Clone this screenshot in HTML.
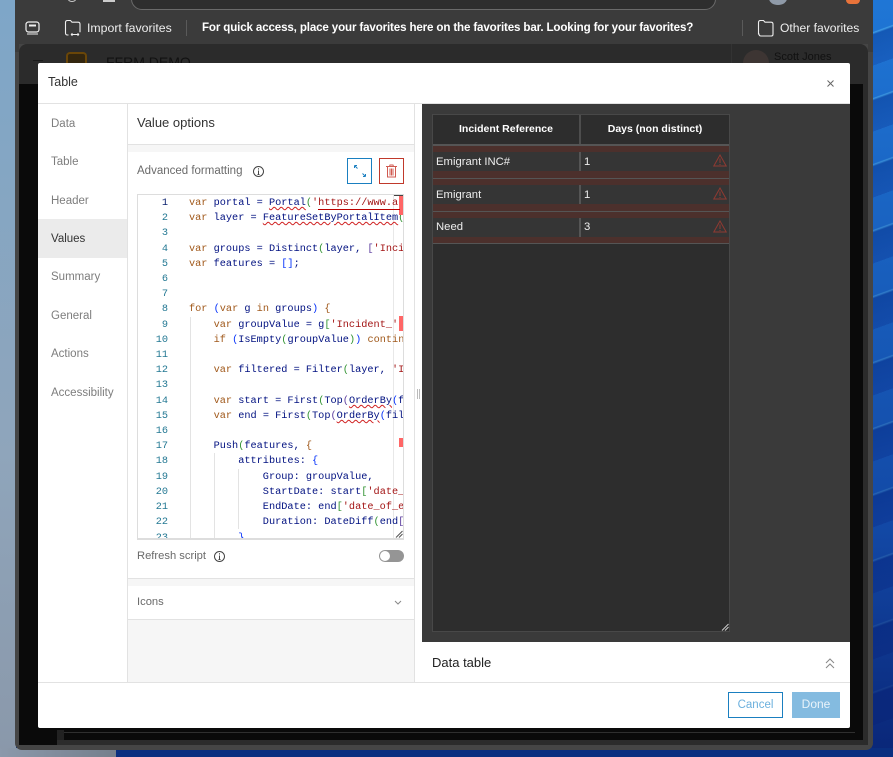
<!DOCTYPE html>
<html><head><meta charset="utf-8"><style>
html,body{margin:0;padding:0;width:893px;height:757px;overflow:hidden;background:#0d2f7c}
*{box-sizing:border-box}
body{position:relative;font-family:"Liberation Sans",sans-serif}
.a{position:absolute}
.t{position:absolute;white-space:pre;line-height:16px}
.nav{position:absolute;left:13px;font-size:11.5px;color:#7d7d7d;line-height:14px;white-space:pre}
.c{position:absolute;left:189px;font:10.25px/15px "Liberation Mono",monospace;white-space:pre;color:#001080;height:15px;width:214px;overflow:hidden}
.n{position:absolute;left:140px;width:28px;text-align:right;font:10.25px/15px "Liberation Mono",monospace;color:#237893}
.k{color:#a0581a}.s{color:#a31515}.b{color:#0431fa}.g{color:#319331}.f{color:#5c3d9e}.w{text-decoration:underline wavy #d02020 1px}
.th{position:absolute;top:115px;height:30px;background:#2d2d2d;color:#fff;font-size:10.5px;font-weight:bold;text-align:center;line-height:28px}
.td{position:absolute;color:#eee;font-size:11.3px;line-height:14px;white-space:pre}
#ed{position:absolute;left:0;top:1px}
</style></head><body>
<div class="a" style="left:0;top:0;width:16px;height:757px;background:linear-gradient(#7ea6c8,#8fa5bb 60%,#8a98aa)"></div>
<div class="a" style="left:872px;top:0;width:21px;height:757px;background:linear-gradient(rgba(40,140,230,.25),rgba(10,40,130,.55) 70%,rgba(8,30,110,.9)),repeating-linear-gradient(160deg,#1c6fd0 0 30px,#49a8ea 31px,#0e4aa8 33px,#1556b8 62px)"></div>
<div class="a" style="left:0;top:748px;width:116px;height:9px;background:linear-gradient(90deg,#8b99ab,#757f8c)"></div>
<div class="a" style="left:116px;top:748px;width:777px;height:9px;background:#0a2f80"></div>

<div class="a" style="left:15px;top:0;width:858px;height:750px;background:#454545;border-radius:0 0 7px 7px"></div>
<div class="a" style="left:15px;top:0;width:858px;height:44px;background:#3b3b3b"></div>
<div class="a" style="left:15px;top:44px;width:4px;height:8px;background:#3b3b3b"></div>
<div class="a" style="left:868px;top:44px;width:5px;height:8px;background:#3b3b3b"></div>
<div class="a" style="left:131px;top:-12px;width:585px;height:21.5px;border:1px solid #6a6a6a;border-radius:14px;background:#2e2e2e"></div>
<div class="a" style="left:68px;top:-3px;width:8px;height:5px;border:1px solid #ccc;border-radius:50%"></div>
<div class="a" style="left:103px;top:0;width:12px;height:2px;background:#ccc"></div>
<div class="a" style="left:769px;top:-8px;width:18px;height:13px;border-radius:50%;background:#8f9aa8"></div>
<div class="a" style="left:846px;top:0;width:14px;height:4px;background:#e8733a;border-radius:0 0 6px 6px"></div>

<!-- app page behind modal -->
<div class="a" style="left:19px;top:44px;width:849px;height:701px;background:#2b2b2b;border-radius:8px 8px 3px 3px"></div>
<div class="a" style="left:19px;top:84px;width:844px;height:656px;background:#0a0a0a"></div>
<div class="a" style="left:57px;top:730px;width:7px;height:15px;background:#222"></div>
<div class="a" style="left:19px;top:740px;width:38px;height:5px;background:#0a0a0a"></div>
<div class="a" style="left:57px;top:740px;width:811px;height:5px;background:#2b2b2b"></div>
<div class="a" style="left:64px;top:732px;width:791px;height:1px;background:#2f2f2f"></div>
<div class="a" style="left:731px;top:44px;width:1px;height:40px;background:#333"></div>
<div class="a" style="left:33px;top:60px;width:10px;height:1px;background:#1a1a1a"></div>
<div class="t" style="left:106px;top:54px;font-size:14px;color:#111">FFRM DEMO</div>
<div class="t" style="left:774px;top:49px;font-size:11px;color:#111">Scott Jones</div>
<div class="a" style="left:66px;top:52px;width:21px;height:14px;background:#33260f;border:2px solid #6a4608;border-bottom:0;border-radius:4px 4px 0 0"></div>
<div class="a" style="left:743px;top:50px;width:26px;height:26px;border-radius:50%;background:#3d3533"></div>

<svg class="a" style="left:24px;top:20px" width="20" height="16" viewBox="0 0 20 16" fill="none" stroke="#eee" stroke-width="1.2"><rect x="2" y="2" width="13" height="10" rx="2.5"/><path d="M5 5.500h7" stroke-width="2"/><path d="M3 14h11" stroke-width="1"/></svg>
<svg class="a" style="left:64px;top:19px" width="18" height="18" viewBox="0 0 18 18" fill="none" stroke="#eee" stroke-width="1.1"><path d="M1.500 14V3.500q0-2 2-2h3l1.500 1.700h6q2 0 2 2v8M1.500 14q0 2 2 2h1"/><path d="M7 15.500h8M7 15.500l1.500-1.300M7 15.500l1.500 1.300M15 15.500l-1.500-1.300M15 15.500l-1.500 1.300" stroke-width=".9"/></svg>
<div class="t" style="left:87px;top:20px;font-size:12.3px;color:#eee">Import favorites</div>
<div class="a" style="left:186px;top:20px;width:1px;height:16px;background:#5a5a5a"></div>
<div class="t" style="left:202px;top:20px;font-size:11.6px;font-weight:bold;color:#fff;letter-spacing:-.15px">For quick access, place your favorites here on the favorites bar. Looking for your favorites?</div>
<div class="a" style="left:742px;top:20px;width:1px;height:16px;background:#5a5a5a"></div>
<svg class="a" style="left:757px;top:19px" width="18" height="18" viewBox="0 0 18 18" fill="none" stroke="#eee" stroke-width="1.1"><path d="M1.500 15V3.500q0-2 2-2h3l1.500 1.700h6q2 0 2 2v10q0 1.800-2 1.800h-10q-2 0-2-2z"/></svg>
<div class="t" style="left:780px;top:20px;font-size:12.1px;color:#eee">Other favorites</div>

<!-- modal -->
<div class="a" style="left:38px;top:63px;width:812px;height:665px;background:#fff;border-radius:2px"></div>
<div class="t" style="left:48px;top:74px;font-size:12.5px;color:#333">Table</div>
<svg class="a" style="left:827px;top:80px" width="7" height="7" viewBox="0 0 7 7" stroke="#666" stroke-width="1" fill="none"><path d="M.5.500l6 6M6.500.500l-6 6"/></svg>
<div class="a" style="left:38px;top:103px;width:812px;height:1px;background:#e2e2e2"></div>

<!-- nav -->
<div class="a" style="left:127px;top:104px;width:1px;height:579px;background:#e2e2e2"></div>
<div class="a" style="left:38px;top:219px;width:89px;height:39px;background:#ebebeb"></div>
<div class="a" style="left:38px;top:105px;width:89px;height:320px">
<div class="nav" style="top:12px">Data</div>
<div class="nav" style="top:50px">Table</div>
<div class="nav" style="top:89px">Header</div>
<div class="nav" style="top:127px;color:#333">Values</div>
<div class="nav" style="top:165px">Summary</div>
<div class="nav" style="top:204px">General</div>
<div class="nav" style="top:242px">Actions</div>
<div class="nav" style="top:281px">Accessibility</div>
</div>

<!-- settings panel -->
<div class="a" style="left:128px;top:104px;width:287px;height:579px;background:#f6f6f6;border-right:1px solid #e2e2e2"></div>
<div class="a" style="left:128px;top:104px;width:286px;height:41px;background:#fff;border-bottom:1px solid #e2e2e2"></div>
<div class="t" style="left:137px;top:115px;font-size:13px;color:#333">Value options</div>
<div class="a" style="left:128px;top:152px;width:286px;height:427px;background:#fff;border-bottom:1px solid #e2e2e2"></div>
<div class="t" style="left:137px;top:163px;font-size:11.5px;color:#6a6a6a">Advanced formatting</div>
<svg class="a" style="left:252px;top:165px" width="13" height="13" viewBox="0 0 13 13" fill="none" stroke="#444"><circle cx="6.500" cy="6.500" r="5"/><path d="M6.500 5.500v4M5.500 9.500h2M6.500 3.300v1.200"/></svg>
<div class="a" style="left:347px;top:158px;width:25px;height:26px;border:1px solid #1a7fc0"></div>
<svg class="a" style="left:353px;top:164px" width="14" height="14" viewBox="0 0 14 14" fill="none" stroke="#1a7fc0"><path d="M1.500 1.500l3 3M1.500 1.500h2.500M1.500 1.500v2.500M12.500 12.500l-3-3M12.500 12.500h-2.500M12.500 12.500v-2.500"/></svg>
<div class="a" style="left:379px;top:158px;width:25px;height:26px;border:1px solid #c0392b"></div>
<svg class="a" style="left:385px;top:164px" width="13" height="14" viewBox="0 0 13 14" fill="none" stroke="#d05a50"><path d="M1 2.500h11M4.500 2.500l.5-1.500h3l.5 1.500M2.500 3v10h8V3M5 4.500v7M6.500 4.500v7M8 4.500v7"/></svg>

<!-- editor -->
<div class="a" style="left:137px;top:194px;width:267px;height:346px;background:#fff;border:1px solid #ddd;border-bottom:2px solid #ddd"></div>
<div class="a" style="left:394px;top:195px;width:9px;height:1px;background:#444"></div>
<div class="a" style="left:393px;top:195px;width:1px;height:343px;background:#e8e8e8"></div>
<div class="a" style="left:190px;top:317px;width:1px;height:221px;background:#e3e3e3"></div>
<div class="a" style="left:214px;top:453px;width:1px;height:85px;background:#e3e3e3"></div>
<div class="a" style="left:238px;top:469px;width:1px;height:60px;background:#e3e3e3"></div>
<div id="ed">
<div class="n" style="top:195px;color:#0b216f">1</div><div class="c" style="top:195px"><span class="k">var</span> portal = <span class="w">Portal</span><span class="g">(</span><span class="s">'https://www.ar</span></div>
<div class="n" style="top:210px">2</div><div class="c" style="top:210px"><span class="k">var</span> layer = <span class="w">FeatureSetByPortalItem</span><span class="g">(</span></div>
<div class="n" style="top:225px">3</div>
<div class="n" style="top:241px">4</div><div class="c" style="top:241px"><span class="k">var</span> groups = Distinct<span class="g">(</span>layer, <span class="f">[</span><span class="s">'Inci</span></div>
<div class="n" style="top:256px">5</div><div class="c" style="top:256px"><span class="k">var</span> features = <span class="b">[]</span>;</div>
<div class="n" style="top:271px">6</div>
<div class="n" style="top:286px">7</div>
<div class="n" style="top:301px">8</div><div class="c" style="top:301px"><span class="k">for</span> <span class="b">(</span><span class="k">var</span> g <span class="k">in</span> groups<span class="b">)</span> <span class="k">{</span></div>
<div class="n" style="top:317px">9</div><div class="c" style="top:317px">    <span class="k">var</span> groupValue = g<span class="g">[</span><span class="s">'Incident_'</span></div>
<div class="n" style="top:332px">10</div><div class="c" style="top:332px">    <span class="k">if</span> <span class="b">(</span>IsEmpty<span class="g">(</span>groupValue<span class="g">)</span><span class="b">)</span> <span class="k">contin</span></div>
<div class="n" style="top:347px">11</div>
<div class="n" style="top:362px">12</div><div class="c" style="top:362px">    <span class="k">var</span> filtered = Filter<span class="g">(</span>layer, <span class="s">'I</span></div>
<div class="n" style="top:377px">13</div>
<div class="n" style="top:393px">14</div><div class="c" style="top:393px">    <span class="k">var</span> start = First<span class="g">(</span>Top<span class="f">(</span><span class="w">OrderBy</span><span class="b">(</span>f</div>
<div class="n" style="top:408px">15</div><div class="c" style="top:408px">    <span class="k">var</span> end = First<span class="g">(</span>Top<span class="f">(</span><span class="w">OrderBy</span><span class="b">(</span>fil</div>
<div class="n" style="top:423px">16</div>
<div class="n" style="top:438px">17</div><div class="c" style="top:438px">    Push<span class="g">(</span>features, <span class="k">{</span></div>
<div class="n" style="top:453px">18</div><div class="c" style="top:453px">        attributes: <span class="b">{</span></div>
<div class="n" style="top:469px">19</div><div class="c" style="top:469px">            Group: groupValue,</div>
<div class="n" style="top:484px">20</div><div class="c" style="top:484px">            StartDate: start<span class="g">[</span><span class="s">'date_</span></div>
<div class="n" style="top:499px">21</div><div class="c" style="top:499px">            EndDate: end<span class="g">[</span><span class="s">'date_of_e</span></div>
<div class="n" style="top:514px">22</div><div class="c" style="top:514px">            Duration: DateDiff<span class="g">(</span>end<span class="f">[</span></div>
<div class="a" style="left:140px;top:530px;width:250px;height:7px;overflow:hidden"><div class="n" style="left:0;top:0">23</div><div class="c" style="left:49px;top:0;color:#0431fa">        }</div></div>
</div>
<div class="a" style="left:399px;top:196px;width:4px;height:19px;background:#f66"></div>
<div class="a" style="left:399px;top:316px;width:4px;height:15px;background:#f66"></div>
<div class="a" style="left:399px;top:438px;width:4px;height:9px;background:#f66"></div>
<div class="a" style="left:318px;top:209px;width:82px;height:1px;background:#b00"></div>
<svg class="a" style="left:395px;top:530px" width="8" height="8" stroke="#555" fill="none"><path d="M1 7.500L7.500 1M4 7.500L7.500 4"/></svg>

<div class="t" style="left:137px;top:548px;font-size:11.2px;color:#6a6a6a">Refresh script</div>
<svg class="a" style="left:213px;top:550px" width="13" height="13" viewBox="0 0 13 13" fill="none" stroke="#444"><circle cx="6.500" cy="6.500" r="5"/><path d="M6.500 5.500v4M5.500 9.500h2M6.500 3.300v1.200"/></svg>
<div class="a" style="left:379px;top:550px;width:25px;height:12px;background:#959595;border-radius:6px"></div>
<div class="a" style="left:380px;top:551px;width:10px;height:10px;background:#fff;border-radius:50%"></div>
<div class="a" style="left:128px;top:586px;width:286px;height:34px;background:#fff;border-bottom:1px solid #e2e2e2"></div>
<div class="t" style="left:137px;top:594px;font-size:11.2px;color:#6a6a6a">Icons</div>
<svg class="a" style="left:394px;top:600px" width="8" height="6" fill="none" stroke="#888"><path d="M1 1l3 3 3-3"/></svg>

<!-- gutter -->
<div class="a" style="left:415px;top:104px;width:7px;height:579px;background:#fff"></div>
<div class="a" style="left:417px;top:389px;width:3px;height:10px;border-left:1px solid #bbb;border-right:1px solid #bbb"></div>

<!-- right preview -->
<div class="a" style="left:422px;top:104px;width:428px;height:538px;background:#3a3a3a"></div>
<div class="a" style="left:432px;top:114px;width:298px;height:518px;background:#2d2d2d;border:1px solid #484848"></div>
<div class="th" style="left:433px;width:146px">Incident Reference</div>
<div class="th" style="left:581px;width:148px">Days (non distinct)</div>
<div class="a" style="left:579px;top:115px;width:2px;height:30px;background:#4d4d4d"></div>
<div class="a" style="left:433px;top:144px;width:296px;height:2px;background:#555"></div>

<div class="a" style="left:433px;top:146px;width:296px;height:33px;background:#4c302c"></div>
<div class="a" style="left:433px;top:152px;width:296px;height:19px;background:#353535"></div>
<div class="a" style="left:433px;top:178px;width:296px;height:1px;background:#555"></div>
<div class="a" style="left:433px;top:179px;width:296px;height:32px;background:#4c302c"></div>
<div class="a" style="left:433px;top:185px;width:296px;height:19px;background:#353535"></div>
<div class="a" style="left:433px;top:211px;width:296px;height:1px;background:#555"></div>
<div class="a" style="left:433px;top:212px;width:296px;height:32px;background:#4c302c"></div>
<div class="a" style="left:433px;top:218px;width:296px;height:19px;background:#353535"></div>
<div class="a" style="left:433px;top:243px;width:296px;height:1px;background:#555"></div>
<div class="a" style="left:579px;top:152px;width:2px;height:19px;background:#555"></div>
<div class="a" style="left:579px;top:185px;width:2px;height:19px;background:#555"></div>
<div class="a" style="left:579px;top:218px;width:2px;height:19px;background:#555"></div>
<div class="td" style="left:436px;top:155px">Emigrant INC#</div><div class="td" style="left:584px;top:155px">1</div>
<div class="td" style="left:436px;top:188px">Emigrant</div><div class="td" style="left:584px;top:188px">1</div>
<div class="td" style="left:436px;top:220px">Need</div><div class="td" style="left:584px;top:220px">3</div>
<svg class="a" style="left:713px;top:154px" width="14" height="13" viewBox="0 0 14 13" fill="none" stroke="#8f3a32"><path d="M7 1L.8 12h12.400zM7 4.500v4.500M7 10v1"/></svg>
<svg class="a" style="left:713px;top:187px" width="14" height="13" viewBox="0 0 14 13" fill="none" stroke="#8f3a32"><path d="M7 1L.8 12h12.400zM7 4.500v4.500M7 10v1"/></svg>
<svg class="a" style="left:713px;top:220px" width="14" height="13" viewBox="0 0 14 13" fill="none" stroke="#8f3a32"><path d="M7 1L.8 12h12.400zM7 4.500v4.500M7 10v1"/></svg>
<svg class="a" style="left:721px;top:623px" width="8" height="8" stroke="#ccc" fill="none"><path d="M1 7.500L7.500 1M4 7.500L7.500 4"/></svg>

<div class="a" style="left:422px;top:642px;width:428px;height:41px;background:#fff"></div>
<div class="t" style="left:432px;top:655px;font-size:13px;color:#222">Data table</div>
<svg class="a" style="left:825px;top:658px" width="10" height="11" fill="none" stroke="#888"><path d="M1 5l4-4 4 4M1 10l4-4 4 4"/></svg>
<div class="a" style="left:38px;top:682px;width:812px;height:1px;background:#e2e2e2"></div>

<div class="a" style="left:728px;top:692px;width:55px;height:26px;border:1px solid #1a7fc0;color:#6cb0dd;font-size:11.5px;text-align:center;line-height:24px">Cancel</div>
<div class="a" style="left:792px;top:692px;width:48px;height:26px;background:#84bbe0;color:#e9f3fa;font-size:12px;text-align:center;line-height:25px">Done</div>
</body></html>
